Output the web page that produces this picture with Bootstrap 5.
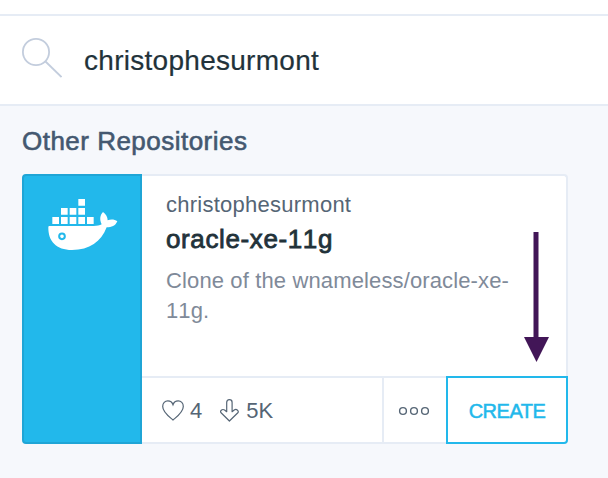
<!DOCTYPE html>
<html lang="en">
<head>
<meta charset="utf-8">
<meta name="viewport" content="width=device-width, initial-scale=1">
<title>Repository search</title>
<link href="https://cdn.jsdelivr.net/npm/bootstrap@5.3.0/dist/css/bootstrap.min.css" rel="stylesheet">
<style>
:root { --line: #e6ecf5; --blue: #22b8eb; }
body { font-family: "Liberation Sans", Arial, sans-serif; background: #f6f8fc; min-height: 478px; overflow: hidden; font-kerning: none; }
.topbar { height: 16px; border-bottom: 2px solid var(--line); }
.searchbar { height: 90px; border-bottom: 2px solid var(--line); padding-left: 22px; }
.lens { margin-bottom: 4px; }
.query { color: #22323a; font-size: 28px; line-height: 34px; letter-spacing: .28px; margin: 2px 0 0 22px; -webkit-text-stroke: .2px #22323a; }
.results { padding: 18px 40px 0 22px; }
.section-title { color: #445870; font-size: 26px; line-height: 34px; margin-bottom: 16px; letter-spacing: .48px; -webkit-text-stroke: .6px #445870; }
.repo { height: 270px; border: 0; border-radius: 4px; background: none; }
.repo-logo { width: 120px; background: var(--blue); border: 2px solid #1fa5d6; border-radius: 4px 0 0 4px; padding: 22px 0 0 24px; }
.repo-info { border: solid var(--line); border-width: 2px 2px 0 0; border-radius: 0 4px 0 0; height: 202px; padding: 14px 50px 0 24px; }
.owner { color: #556575; font-size: 22px; line-height: 30px; letter-spacing: .25px; }
.repo-name { color: #22323a; font-size: 26px; line-height: 34px; margin: 2px 0 10px; letter-spacing: .62px; -webkit-text-stroke: .8px #22323a; }
.about { color: #7f8a99; font-size: 22px; line-height: 30px; margin: 0; letter-spacing: .13px; }
.repo-foot { height: 68px; color: #556575; font-size: 22px; }
.stats { border: solid var(--line); border-width: 2px 0; padding-left: 20px; }
.stat-likes { margin: 0 18px 0 6px; }
.stat-pulls { margin-left: 7px; }
.more { width: 64px; border: solid var(--line); border-width: 2px 0 2px 2px; padding: 2px 2px 0 0; }
.create { width: 122px; border: 2px solid var(--blue); border-radius: 0 0 4px 0; color: var(--blue); font-size: 20px; letter-spacing: -.5px; background: #fff; padding: 2px 0 0; -webkit-text-stroke: .5px var(--blue); }
.pointer { top: 58px; right: 19px; }
</style>
</head>
<body>
<div class="topbar bg-white"></div>
<div class="searchbar bg-white d-flex align-items-center">
  <svg class="lens" width="40" height="42" viewBox="0 0 40 42" fill="none" stroke="#c3cddd" stroke-width="1.8"><circle cx="14" cy="15" r="13.1"/><path d="M23.5 24.5 39.5 40"/></svg>
  <div class="query">christophesurmont</div>
</div>
<main class="results">
  <h2 class="section-title fw-normal">Other Repositories</h2>
  <div class="repo card flex-row position-relative">
    <div class="repo-logo flex-shrink-0">
      <svg class="d-block" width="70" height="53" viewBox="99 99 210 159" fill="#fff">
        <path d="M190 102h20v20h-20zM138 129h20v20h-20zM164 129h20v20h-20zM190 129h20v20h-20zM112 156h20v21h-20zM138 156h20v21h-20zM164 156h20v21h-20zM190 156h20v21h-20zM216 156h20v21h-20z"/>
        <path d="M103 183H236C246 183 254 181 260 178C253 164 255 150 264 141C273 148 278 156 278 166C288 162 299 163 307 169C301 183 290 187 275 187C258 231 224 255 171 255C124 255 99 229 100 186Q100 183 103 183Z"/>
        <circle cx="141" cy="214" r="8.5" stroke="#22b8eb" stroke-width="6"/>
      </svg>
    </div>
    <div class="flex-grow-1 d-flex flex-column">
      <div class="repo-info bg-white">
        <div class="owner">christophesurmont</div>
        <h3 class="repo-name fw-normal">oracle-xe-11g</h3>
        <p class="about">Clone of the wnameless/oracle-xe-11g.</p>
      </div>
      <div class="repo-foot d-flex">
        <div class="stats bg-white flex-grow-1 d-flex align-items-center">
          <svg width="22" height="21" viewBox="0 0 22 21" fill="none" stroke="#556575" stroke-width="1.2"><path d="M11 20C7 16.5 .7 12 .7 6.4C.7 3.2 3 .9 5.8 .9C8.3 .9 10.2 2.4 11 4.7C11.8 2.4 13.7 .9 16.2 .9C19 .9 21.3 3.2 21.3 6.4C21.3 12 15 16.5 11 20Z"/></svg>
          <span class="stat-likes">4</span>
          <svg width="19" height="23" viewBox="0 0 19 23" fill="none" stroke="#556575" stroke-width="1.2" stroke-linejoin="round"><path d="M6.7 12.7V3.4Q6.7.7 9.4.7T12.1 3.4V12.7L14.2 11Q16 9.8 17.5 11.2T17.6 14L9.4 22L1.3 14Q-.2 12.5 1.3 11.2T4.6 11Z"/></svg>
          <span class="stat-pulls">5K</span>
        </div>
        <div class="more bg-white d-flex align-items-center justify-content-center">
          <svg width="32" height="10" viewBox="0 0 32 10" fill="none" stroke="#556575" stroke-width="1.4"><circle cx="5" cy="5" r="3.4"/><circle cx="16" cy="5" r="3.4"/><circle cx="27" cy="5" r="3.4"/></svg>
        </div>
        <button class="create" type="button">CREATE</button>
      </div>
    </div>
    <svg class="pointer position-absolute" width="25" height="130" viewBox="0 0 25 130" fill="#421657"><path d="M9.5 0h5v105H25L12.5 130 0 105H9.5z"/></svg>
  </div>
</main>
</body>
</html>
